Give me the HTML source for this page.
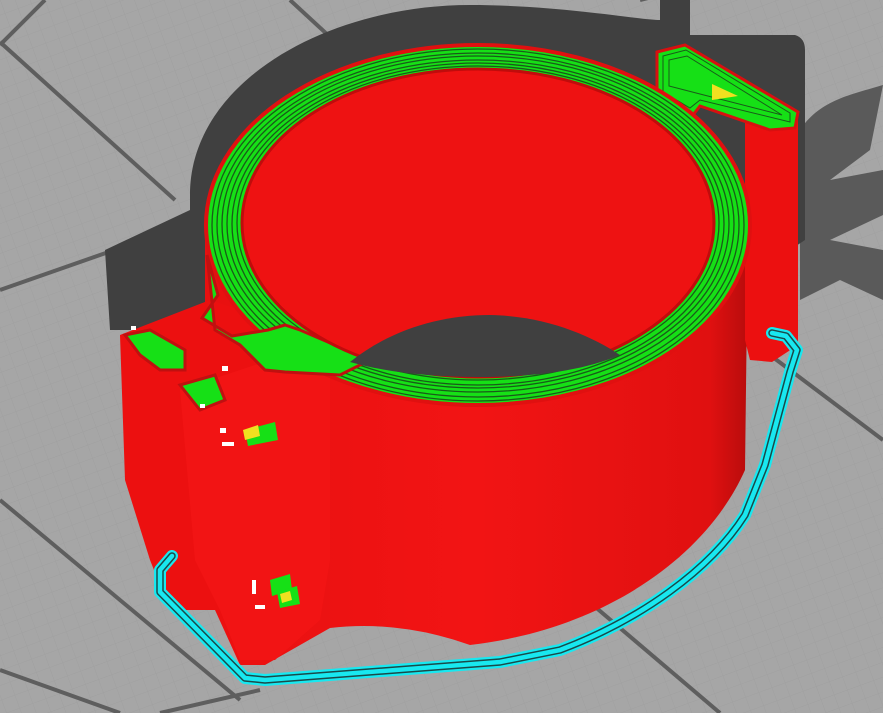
<!DOCTYPE html>
<html><head><meta charset="utf-8"><style>html,body{margin:0;padding:0;width:883px;height:713px;overflow:hidden;background:#a6a6a6}</style></head>
<body>
<svg width="883" height="713" viewBox="0 0 883 713" xmlns="http://www.w3.org/2000/svg">
<defs>
<pattern id="g" width="14" height="14" patternUnits="userSpaceOnUse" patternTransform="rotate(-20)">
<path d="M0 0H14M0 0V14" stroke="#9c9c9c" stroke-width="1"/>
</pattern>
<linearGradient id="body" x1="0" x2="1" y1="0" y2="0">
<stop offset="0" stop-color="#e81010"/><stop offset="0.5" stop-color="#f21414"/><stop offset="0.93" stop-color="#e01010"/><stop offset="1" stop-color="#b80c0c"/>
</linearGradient>
</defs>
<rect width="883" height="713" fill="#a6a6a6"/>
<rect width="883" height="713" fill="url(#g)" opacity="0.6"/>
<g stroke="#5e5e5e" stroke-width="4" fill="none">
<path d="M0 45 L45 0"/>
<path d="M0 42 L175 200"/>
<path d="M0 500 L240 700"/>
<path d="M0 290 L200 220"/>
<path d="M290 0 L420 120"/>
<path d="M640 0 L883 -60"/>
<path d="M540 560 L720 713"/>
<path d="M770 355 L883 440"/>
<path d="M0 670 L120 713"/>
<path d="M160 713 L260 690"/>
</g>
<!-- right plant-like shadow -->
<path d="M883 85 C850 95 820 100 800 130 L800 300 L840 280 L883 300 L883 250 L830 240 L883 215 L883 170 L830 180 L870 150 Z" fill="#5a5a5a"/>
<!-- shadow -->
<path d="M190 195 C190 80 330 5 470 5 C560 5 640 20 660 20 L660 0 L690 0 L690 35 L795 35 Q805 38 805 50 L805 240 L760 270 L740 330 L110 330 L105 250 L190 210 Z" fill="#404040"/>
<!-- cylinder body -->
<path d="M205 225 L205 520 L265 665 L330 628 Q400 620 470 645 C600 630 705 560 745 470 L748 225 Z" fill="url(#body)"/>
<!-- right tab column -->
<path d="M745 112 L798 112 L798 345 L772 362 L750 360 L745 340 Z" fill="#ec1010"/>
<path d="M657 52 L685 45 L798 112 L795 128 L770 130 L700 106 L693 115 L680 110 L664 100 L657 92 Z" fill="#16e016" stroke="#d81010" stroke-width="3"/>
<g fill="none" stroke="#1a5a1a" stroke-width="1"><path d="M663 56 L686 50 L790 113 L790 122 L700 100 L690 108 L663 92 Z"/><path d="M669 60 L687 56 L782 115 L700 94 L669 86 Z"/></g>
<path d="M712 84 L738 96 L712 100 Z" fill="#f0e020"/>
<path d="M665 112 L678 116 L670 122 Z" fill="#f0e020"/>
<!-- left pieces -->
<path d="M120 335 L210 300 L300 330 L300 620 L265 665 L240 665 L215 610 L170 610 L150 560 L125 480 Z" fill="#ec1010"/>
<path d="M180 390 L330 340 L330 560 L320 620 L275 660 L240 660 L220 610 L195 560 Z" fill="#f21414"/>
<path d="M125 335 L150 330 L185 350 L185 370 L160 370 L140 355 Z" fill="#16e016" stroke="#c01010" stroke-width="3"/>
<path d="M180 385 L215 375 L225 400 L200 410 Z" fill="#16e016" stroke="#c01010" stroke-width="3"/>
<path d="M245 430 L275 422 L278 440 L248 446 Z" fill="#16e016"/>
<path d="M243 430 L258 425 L260 436 L245 440 Z" fill="#f0e020"/>
<path d="M270 580 L290 574 L292 590 L272 596 Z" fill="#16e016"/>
<path d="M277 592 L297 586 L300 604 L280 608 Z" fill="#16e016"/>
<path d="M280 594 L290 591 L292 600 L282 603 Z" fill="#f0e020"/>
<!-- cylinder top rim -->
<ellipse cx="478" cy="225" rx="272" ry="180" fill="#16e016" stroke="#e01010" stroke-width="4"/>
<g fill="none" stroke="#1a5a1a" stroke-width="1.3">
<ellipse cx="478" cy="225" rx="266" ry="176"/>
<ellipse cx="478" cy="225" rx="261" ry="172"/>
<ellipse cx="478" cy="224" rx="256" ry="168"/>
<ellipse cx="478" cy="224" rx="251" ry="164"/>
<ellipse cx="478" cy="224" rx="246" ry="161"/>
<ellipse cx="478" cy="223" rx="241" ry="157"/>
</g>
<!-- left rim extension -->
<path d="M207 255 L218 295 L202 318 L232 336 L268 330 L285 325 L300 330 L370 360 L340 375 L285 372 L265 370 L240 345 L215 330 Z" fill="#16e016" stroke="#c01010" stroke-width="3"/>
<!-- inner hole -->
<ellipse cx="478" cy="223" rx="236" ry="154" fill="#ee1212" stroke="#c00c0c" stroke-width="3"/>
<path d="M350 362 C390 330 440 315 490 315 C545 316 590 335 620 355 C580 372 530 377 478 377 C430 377 385 372 350 362 Z" fill="#404040"/>
<!-- cyan loop -->
<g fill="none" stroke-linejoin="round" stroke-linecap="round">
<path id="c" d="M172 556 L160 570 L160 592 L245 678 L265 680 L500 662 L560 650 C640 620 710 570 745 515 L765 465 L790 372 L797 350 L786 336 L772 333" stroke="#18e8f0" stroke-width="12"/>
<path d="M172 556 L160 570 L160 592 L245 678 L265 680 L500 662 L560 650 C640 620 710 570 745 515 L765 465 L790 372 L797 350 L786 336 L772 333" stroke="#1a4a4a" stroke-width="7.5"/>
<path d="M172 556 L160 570 L160 592 L245 678 L265 680 L500 662 L560 650 C640 620 710 570 745 515 L765 465 L790 372 L797 350 L786 336 L772 333" stroke="#18e8f0" stroke-width="4.5"/>
</g>
<!-- white bits -->
<g fill="#fff"><rect x="131" y="326" width="5" height="4"/><rect x="222" y="366" width="6" height="5"/><rect x="200" y="404" width="5" height="4"/><rect x="220" y="428" width="6" height="5"/><rect x="222" y="442" width="12" height="4"/><rect x="255" y="605" width="10" height="4"/><rect x="252" y="580" width="4" height="14"/></g>
</svg>
</body></html>
